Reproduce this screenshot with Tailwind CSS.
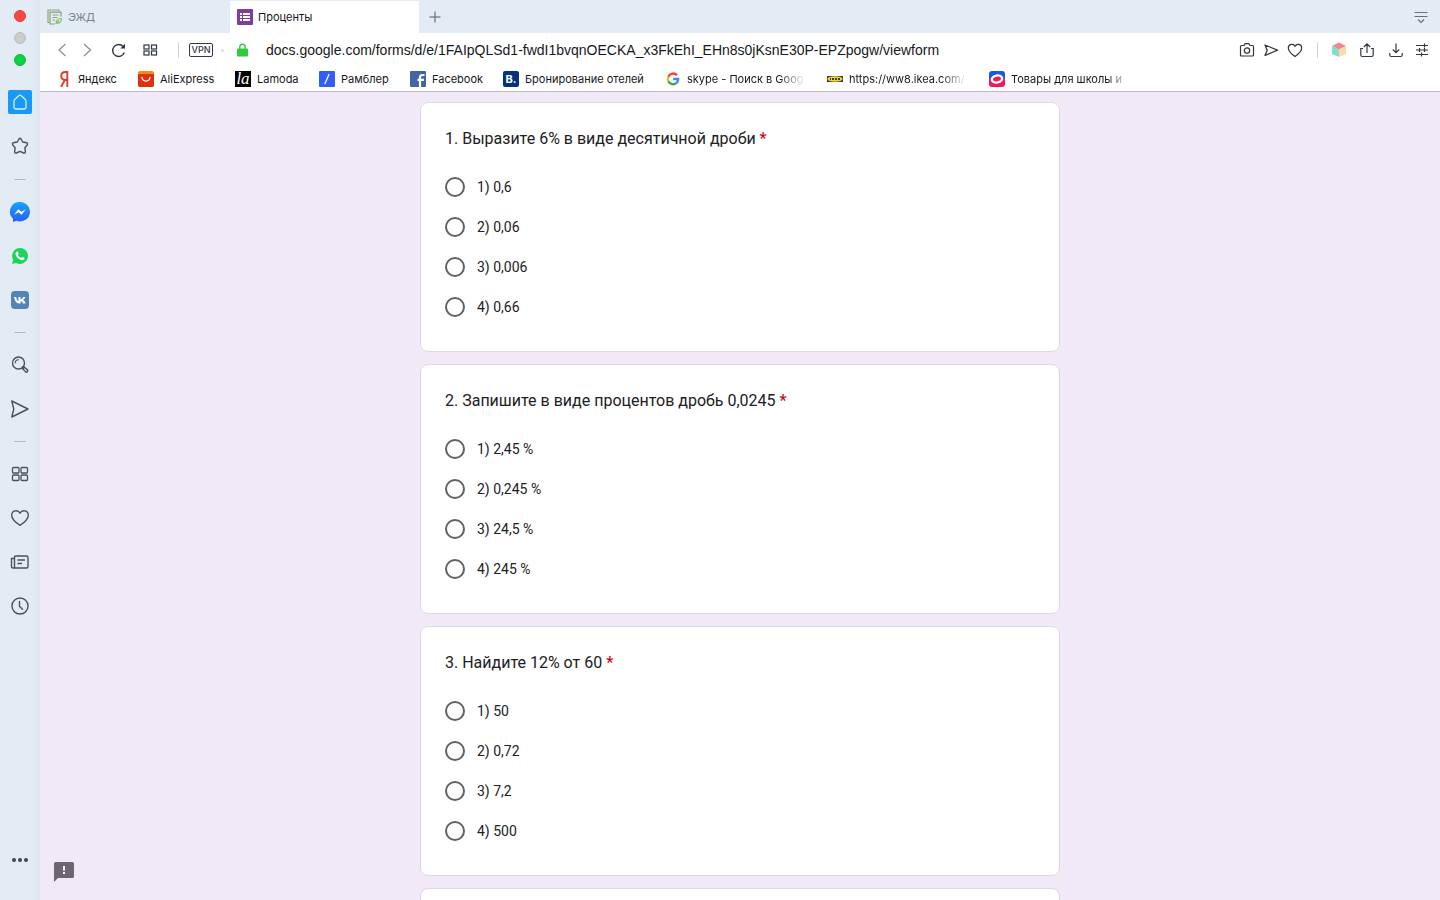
<!doctype html>
<html lang="ru">
<head>
  <meta charset="UTF-8">
  <meta name="viewport" content="width=device-width, initial-scale=1.0">
  <title>Проценты</title>
  <script src="https://cdn.jsdelivr.net/npm/@tailwindcss/browser@4"></script>
</head>
<body class="h-screen flex overflow-hidden bg-[#f1e9f8] font-['Inter','Liberation_Sans',sans-serif] text-[#16181b]">
    <!-- Sidebar -->
    <aside class="w-10 shrink-0 flex flex-col items-center bg-linear-to-r from-[#e3ecf5] from-75% to-[#dde5f0] text-[#4a525b]">
        <div class="h-20 pt-[10px] flex flex-col gap-[10px]">
            <button aria-label="Закрыть" class="block size-3 rounded-full bg-[#fc4640] border border-[#e23e3c]"></button>
            <button aria-label="Свернуть" class="block size-3 rounded-full bg-[#cccdcb] border border-[#bcbdbc]"></button>
            <button aria-label="Развернуть" class="block size-3 rounded-full bg-[#09d43f] border border-[#0cbb3a]"></button>
        </div>
        <nav class="flex flex-col items-center">
            <a href="#" aria-label="Главная" class="h-11 w-10 flex items-center justify-center">
                <span class="size-6 rounded-xs bg-[#1899f5] flex items-center justify-center">
                    <svg class="size-5" viewBox="0 0 20 20" fill="none" stroke="#d9f0ff" stroke-width="1.3" stroke-linejoin="round"><path d="M10 3.2Q10.7 3.2 11.3 3.7L15 7.2Q16 8.2 16 9.5V15Q16 17 14 17H6Q4 17 4 15V9.5Q4 8.2 5 7.2L8.7 3.7Q9.3 3.2 10 3.2Z"/></svg>
                </span>
            </a>
            <a href="#" aria-label="Закладки" class="h-11 w-10 flex items-center justify-center">
                <svg class="size-5" viewBox="0 0 20 20" fill="none" stroke="currentColor" stroke-width="1.4" stroke-linejoin="round"><path d="M9 3Q10 1.6 11 3L12.7 6L16.8 6.8Q18.2 7.4 17.3 8.7L14.9 11.8L15.4 15.8Q15.2 17.5 13.6 17L10 15.4L6.4 17Q4.8 17.5 4.6 15.8L5.1 11.8L2.7 8.7Q1.8 7.4 3.2 6.8L7.3 6Z"/></svg>
            </a>
            <div class="h-[22px] flex items-center"><hr class="w-3 border-[#b3bdc7]"></div>
            <a href="#" aria-label="Messenger" class="h-11 w-10 flex items-center justify-center">
                <svg class="size-5" viewBox="0 0 20 20"><defs><linearGradient id="ms" x1="0" y1="0" x2="0" y2="1"><stop offset="0" stop-color="#16a3fc"/><stop offset="1" stop-color="#2b5df5"/></linearGradient></defs><path fill="url(#ms)" d="M10 0a10 9.7 0 1 1-3.5 18.8L3 20V16.8A9.7 9.7 0 0 1 10 0Z"/><path fill="#fff" d="M4 12.7 8.3 7.2l3.1 2.5L16 7.2l-4.5 5.5-3-2.5Z"/></svg>
            </a>
            <a href="#" aria-label="WhatsApp" class="h-11 w-10 flex items-center justify-center">
                <svg class="size-[18px]" viewBox="0 0 18 18"><path fill="#1bd45e" d="M9 1a8 8 0 1 1-3.9 15L1 17l1.2-4A8 8 0 0 1 9 1Z"/><path fill="#fff" d="M6 4.6c.5-.1.8 0 1 .5l.7 1.5c.1.3 0 .5-.8 1.4.8 1.5 1.8 2.4 3.3 3 .8-1 .9-1.2 1.3-1l1.8.9c.4.2.2 1-.2 1.6-.6.7-1.7 1-2.8.6C7.6 12 6 10.5 5 8.5c-.9-1.7-.4-3.1 1-3.9Z"/></svg>
            </a>
            <a href="#" aria-label="ВКонтакте" class="h-11 w-10 flex items-center justify-center">
                <svg class="size-[18px]" viewBox="0 0 18 18"><rect width="18" height="18" rx="4" fill="#5484b5"/><path fill="#fff" d="M9.3 12.6C5.8 12.6 3.7 10.2 3 5.9h2.2c.3 2.3 1 3.8 2.2 4.3V5.9h2.2v2.6c1-.2 1.9-1.2 2.5-2.6h2.2c-.3 1.4-1.2 2.5-2.2 3.2 1.2.6 2 1.8 2.6 3.5h-2.5c-.5-1.2-1.3-2-2.6-2.3v2.3Z"/></svg>
            </a>
            <div class="h-[21px] flex items-center"><hr class="w-3 border-[#b3bdc7]"></div>
            <a href="#" aria-label="Поиск" class="h-11 w-10 flex items-center justify-center">
                <svg class="size-5" viewBox="0 0 20 20" fill="none" stroke="currentColor" stroke-width="1.4" stroke-linecap="round" stroke-linejoin="round"><circle cx="8.5" cy="8" r="6"/><path stroke-width="1.1" d="M5.2 8a3.3 3.3 0 0 1 3.3-3.3"/><path d="M12.9 12.1l.8.8M13.8 11.7l3.7 3.2q.7 1-.1 1.8t-1.8.2l-3.3-3.7q-.3-.8.3-1.3t1.2-.2Z"/></svg>
            </a>
            <a href="#" aria-label="Flow" class="h-11 w-10 flex items-center justify-center">
                <svg class="size-5" viewBox="0 0 20 20" fill="none" stroke="currentColor" stroke-width="1.4" stroke-linejoin="round"><path d="M1.8 2 18 10 1.8 18 3.8 10Z"/></svg>
            </a>
            <div class="h-[21px] flex items-center"><hr class="w-3 border-[#b3bdc7]"></div>
            <a href="#" aria-label="Экспресс-панель" class="h-11 w-10 flex items-center justify-center">
                <svg class="size-5" viewBox="0 0 20 20" fill="none" stroke="currentColor" stroke-width="1.3"><rect x="2.5" y="3.5" width="6.5" height="5.5" rx="1"/><rect x="11" y="3.5" width="6.5" height="5.5" rx="1"/><rect x="2.5" y="11" width="6.5" height="5.5" rx="1"/><rect x="11" y="11" width="6.5" height="5.5" rx="1"/></svg>
            </a>
            <a href="#" aria-label="Избранное" class="h-11 w-10 flex items-center justify-center">
                <svg class="size-5" viewBox="0 0 20 20" fill="none" stroke="currentColor" stroke-width="1.4" stroke-linejoin="round"><path d="M10 17.3C6 14.8 1.7 11.2 1.7 7.3c0-5 6.3-6 8.3-2 2-4 8.3-3 8.3 2 0 3.9-4.3 7.5-8.3 10Z"/></svg>
            </a>
            <a href="#" aria-label="Новости" class="h-11 w-10 flex items-center justify-center">
                <svg class="size-5" viewBox="0 0 20 20" fill="none" stroke="currentColor" stroke-width="1.4"><path d="M4.5 16H3q-1.5 0-1.5-1.5V6.5h3M4.5 16V5q0-1 1-1h11q1.5 0 1.5 1.5v9q0 1.5-1.5 1.5H4.5M7.5 8H15M7.5 11.5H12"/></svg>
            </a>
            <a href="#" aria-label="История" class="h-11 w-10 flex items-center justify-center">
                <svg class="size-5" viewBox="0 0 20 20" fill="none" stroke="currentColor" stroke-width="1.4" stroke-linecap="round"><circle cx="10" cy="10" r="8"/><path d="M9.5 5.5v4.7l3 3"/></svg>
            </a>
        </nav>
        <button aria-label="Ещё" class="mt-auto mb-[30px] w-10 h-5 flex items-center justify-center gap-[2px]">
            <span class="size-1 rounded-full bg-[#3d444d]"></span>
            <span class="size-1 rounded-full bg-[#3d444d]"></span>
            <span class="size-1 rounded-full bg-[#3d444d]"></span>
        </button>
    </aside>

    <div class="flex-1 min-w-0 flex flex-col">
        <!-- Tabs -->
        <div class="h-[33px] shrink-0 bg-[#e3ebf5] flex items-end text-[11px]">
            <button class="w-[190px] h-8 pl-[7px] flex items-center gap-[5px] text-[#7b828b]">
                <svg class="size-4" viewBox="0 0 16 16" fill="none" stroke="#8c9d80" stroke-width="1.2"><path d="M2.5 13.5H1V1h11v1.5" stroke="#87ad72"/><path d="M14 7.5V3.2H3V15h5M5.5 6h6M5.5 8.5h5M5.5 11h2.5"/><path d="M9 14.5c0-3 2-5 5.5-5 0 3-2 5-5.5 5ZM9 14.5l3-3" stroke="#85c66a"/></svg>
                <span>ЭЖД</span>
            </button>
            <button class="w-[189px] h-8 pl-[7px] flex items-center gap-[5px] bg-white">
                <svg class="size-4" viewBox="0 0 16 16"><rect width="16" height="16" rx="1" fill="#7b3fa0"/><path fill="#fff" d="M3 4h2v2H3zM6 4h7v2H6zM3 7h2v2H3zM6 7h7v2H6zM3 10h2v2H3zM6 10h7v2H6z"/></svg>
                <span>Проценты</span>
            </button>
            <button aria-label="Новая вкладка" class="size-8 flex items-center justify-center">
                <svg class="size-3" viewBox="0 0 12 12" stroke="#535b64"><path d="M6 .5v11M.5 6h11"/></svg>
            </button>
            <button aria-label="Меню вкладок" class="ml-auto mr-3 h-8 flex items-center">
                <svg class="size-[14px]" viewBox="0 0 14 14" fill="none" stroke="#657080" stroke-width="1.2"><path d="M.5 2.5h13M.5 6.5h13M4 9.5l3 3 3-3"/></svg>
            </button>
        </div>

        <!-- Address bar -->
        <div class="h-[34px] shrink-0 bg-white flex items-center text-[#31383f]">
            <div class="w-[138px] shrink-0 pl-[14px] flex items-center">
                <button aria-label="Назад" class="mr-[10px]"><svg class="size-4" viewBox="0 0 16 16" fill="none" stroke="#8c9196" stroke-width="1.3"><path d="M11.5 2 5 8l6.5 6"/></svg></button>
                <button aria-label="Вперёд" class="mr-[14px]"><svg class="size-4" viewBox="0 0 16 16" fill="none" stroke="#8c9196" stroke-width="1.3"><path d="M4 2l6.5 6L4 14"/></svg></button>
                <button aria-label="Обновить" class="mr-4"><svg class="size-4" viewBox="0 0 16 16" fill="none" stroke="currentColor" stroke-width="1.4"><path d="M14.3 10.5A6 6 0 1 1 13.2 4.5"/><path d="M15 1.8v4.7h-4.7Z" fill="currentColor" stroke="none"/></svg></button>
                <button aria-label="Экспресс-панель"><svg class="size-4" viewBox="0 0 16 16" fill="none" stroke="currentColor" stroke-width="1.2"><rect x="2" y="3" width="5" height="4"/><rect x="9.5" y="3" width="5" height="4"/><rect x="2" y="9" width="5" height="4"/><rect x="9.5" y="9" width="5" height="4"/></svg></button>
            </div>
            <div class="w-[11px] h-4 border-l border-[#cfd2d6] shrink-0"></div>
            <button class="w-6 h-[14px] shrink-0 border border-[#31383f] rounded-xs text-[9px] leading-3 font-medium text-center">VPN</button>
            <span class="size-[3px] ml-2 mr-[13px] rounded-full bg-[#dde0e3] shrink-0"></span>
            <svg class="w-[11px] h-[14px] mr-[18px] shrink-0" viewBox="0 0 11 14"><path d="M2.8 7V4q0-2.8 2.7-2.8T8.2 4V7" fill="none" stroke="#32c93c" stroke-width="1.4"/><rect y="5.5" width="11" height="8" rx="1" fill="#32c93c"/></svg>
            <input type="text" aria-label="Адрес" class="flex-1 min-w-0 text-sm text-[#16181b] outline-none font-['Liberation_Sans',sans-serif]" value="docs.google.com/forms/d/e/1FAIpQLSd1-fwdI1bvqnOECKA_x3FkEhI_EHn8s0jKsnE30P-EPZpogw/viewform">
            <div class="shrink-0 flex items-center pr-[10px]">
                <button aria-label="Снимок" class="mr-2"><svg class="size-4" viewBox="0 0 16 16" fill="none" stroke="currentColor" stroke-width="1.2"><path d="M1.5 4.5q0-1 1-1H5L6.2 1.6h3.6L11 3.5h2.5q1 0 1 1V13q0 1-1 1h-11q-1 0-1-1Z"/><circle cx="8" cy="8.6" r="2.7"/></svg></button>
                <button aria-label="Flow" class="mr-2"><svg class="size-4" viewBox="0 0 16 16" fill="none" stroke="currentColor" stroke-width="1.3" stroke-linejoin="round"><path d="M2 3 14.5 8.2 2 13.5 4.2 8.2Z"/></svg></button>
                <button aria-label="В избранное" class="mr-[14px]"><svg class="size-4" viewBox="0 0 16 16" fill="none" stroke="currentColor" stroke-width="1.2"><path d="M8 14.5C4.5 12 1.3 9 1.3 6 1.3 2 6.3 1 8 4.3 9.7 1 14.7 2 14.7 6c0 3-3.2 6-6.7 8.5Z"/></svg></button>
                <div class="h-4 w-[14px] border-l border-[#cfd2d6]"></div>
                <button aria-label="Расширение" class="mr-3"><svg class="size-4" viewBox="0 0 16 16"><path fill="#f28492" d="M8 .5 15 4 8 7.5 1 4Z"/><path fill="#7edfca" d="M1 4l7 3.5V15L1 12Z"/><path fill="#fbd9a6" d="M15 4 8 7.5V15l7-3Z"/></svg></button>
                <button aria-label="Поделиться" class="mr-[13px]"><svg class="size-4" viewBox="0 0 16 16" fill="none" stroke="currentColor" stroke-width="1.2"><path d="M4 6.5H1.8V13q0 1.5 1.5 1.5h9.4q1.5 0 1.5-1.5V6.5H12M8 11V1.8M4.8 5 8 1.8 11.2 5"/></svg></button>
                <button aria-label="Загрузки" class="mr-[10px]"><svg class="size-4" viewBox="0 0 16 16" fill="none" stroke="currentColor" stroke-width="1.2"><path d="M1.8 11v2q0 1.5 1.5 1.5h9.4q1.5 0 1.5-1.5v-2M8 1.5v9.2M4.8 7.5 8 10.7l3.2-3.2"/></svg></button>
                <button aria-label="Настройка"><svg class="size-4" viewBox="0 0 16 16" fill="none" stroke="currentColor" stroke-width="1.2"><path d="M2 3.5h12M2 8h12M2 12.5h12M10.5 1.5v4M5.5 6v4M10.5 6v4M7.5 10.5v4"/></svg></button>
            </div>
        </div>

        <!-- Bookmarks -->
        <nav class="h-[25px] shrink-0 bg-white border-b border-[#bfb9c9] pl-4 flex items-center gap-[22px] text-[11px] whitespace-nowrap">
            <a href="#" class="w-[60px] shrink-0 flex items-center gap-[6px]">
                <svg class="size-4 shrink-0" viewBox="0 0 16 16" fill="none" stroke="#e23b30" stroke-width="1.9"><path d="M11.3 16V1H9.5C3.8 1 3.8 9 9.3 9h2M8.8 9 5 16"/></svg>
                <span>Яндекс</span>
            </a>
            <a href="#" class="w-[75px] shrink-0 flex items-center gap-[6px]">
                <svg class="size-4 shrink-0" viewBox="0 0 16 16"><rect width="16" height="16" rx="2" fill="#f58b1f"/><path fill="#e0300f" d="M0 3h16v11q0 2-2 2H2q-2 0-2-2Z"/><path d="M4 6.5c.5 4.7 7.5 4.7 8 0" fill="none" stroke="#fff" stroke-width="1.3" stroke-linecap="round"/></svg>
                <span>AliExpress</span>
            </a>
            <a href="#" class="w-[62px] shrink-0 flex items-center gap-[6px]">
                <span class="size-4 shrink-0 bg-black text-white text-center text-[17px] leading-4 italic font-['Liberation_Serif',serif]" aria-hidden="true">la</span>
                <span>Lamoda</span>
            </a>
            <a href="#" class="w-[69px] shrink-0 flex items-center gap-[6px]">
                <svg class="size-4 shrink-0" viewBox="0 0 16 16"><rect width="16" height="16" rx="1" fill="#315efb"/><path d="M10.2 3 5.8 13" stroke="#fff" stroke-width="1.3"/></svg>
                <span>Рамблер</span>
            </a>
            <a href="#" class="w-[71px] shrink-0 flex items-center gap-[6px]">
                <svg class="size-4 shrink-0" viewBox="0 0 16 16"><rect width="16" height="16" rx="1" fill="#4465a5"/><path d="M10 16V6.5q0-2.5 2.5-2.5H14.5M7.5 8.8h6.5" fill="none" stroke="#fff" stroke-width="2.2"/></svg>
                <span>Facebook</span>
            </a>
            <a href="#" class="w-[140px] shrink-0 flex items-center gap-[6px]">
                <span class="size-4 shrink-0 rounded-xs bg-[#04337b] text-white text-center leading-4 font-bold" aria-hidden="true">B.</span>
                <span>Бронирование отелей</span>
            </a>
            <a href="#" class="w-[140px] shrink-0 flex items-center gap-[6px]">
                <svg class="size-4 shrink-0" viewBox="0 0 16 16" fill="none" stroke-width="2.3"><path stroke="#ea4335" d="M12 4.3A5.2 5.2 0 0 0 3.3 5.7"/><path stroke="#fbbc05" d="M3.3 5.7a5.2 5.2 0 0 0 0 4.6"/><path stroke="#34a853" d="M3.3 10.3a5.2 5.2 0 0 0 8.2 1.6"/><path stroke="#4285f4" d="M11.5 11.9A5.2 5.2 0 0 0 13.2 8H8.2"/></svg>
                <span class="flex-1 overflow-hidden [mask-image:linear-gradient(to_right,black_78%,transparent)]">skype - Поиск в Goog</span>
            </a>
            <a href="#" class="w-[140px] shrink-0 flex items-center gap-[6px]">
                <svg class="size-4 shrink-0" viewBox="0 0 16 16"><path fill="#3c3d30" d="M0 5h16v6H0z"/><ellipse cx="8" cy="8" rx="7.5" ry="2.7" fill="#f1d32b"/><path fill="#3c3d30" d="M3 7h1v2H3zM5 7h2v2H5zM8 7h2v2H8zM11 7h2v2h-2z"/></svg>
                <span class="flex-1 overflow-hidden [mask-image:linear-gradient(to_right,black_78%,transparent)]">https://ww8.ikea.com/</span>
            </a>
            <a href="#" class="w-[140px] shrink-0 flex items-center gap-[6px]">
                <svg class="size-4 shrink-0" viewBox="0 0 16 16"><path fill="#175ce0" d="M3 0h10q3 0 3 3v5H0V3q0-3 3-3Z"/><path fill="#f3175c" d="M0 8h16v5q0 3-3 3H3q-3 0-3-3Z"/><ellipse cx="8" cy="8" rx="5.2" ry="3.4" fill="#f3175c" stroke="#fff" stroke-width="2.4" transform="rotate(-12 8 8)"/></svg>
                <span class="flex-1 overflow-hidden [mask-image:linear-gradient(to_right,black_82%,transparent)]">Товары для школы и</span>
            </a>
        </nav>

        <!-- Form -->
        <main class="relative flex-1 min-h-0 overflow-hidden px-4 pt-[10px] font-[Roboto,'Liberation_Sans',sans-serif] text-[#202124]">
            <form class="max-w-[640px] mx-auto flex flex-col gap-3">
                <fieldset class="bg-white border border-[#dcd8e2] rounded-lg p-6">
                    <legend class="float-left w-full mb-4 text-base leading-6">1. Выразите 6% в виде десятичной дроби <span class="font-medium text-[#d0021b]">*</span></legend>
                    <div class="clear-both text-sm">
                        <label class="h-10 flex items-center gap-3"><input type="radio" name="q1" class="appearance-none size-5 rounded-full border-2 border-[#5f6368] checked:border-[6px]">1) 0,6</label>
                        <label class="h-10 flex items-center gap-3"><input type="radio" name="q1" class="appearance-none size-5 rounded-full border-2 border-[#5f6368] checked:border-[6px]">2) 0,06</label>
                        <label class="h-10 flex items-center gap-3"><input type="radio" name="q1" class="appearance-none size-5 rounded-full border-2 border-[#5f6368] checked:border-[6px]">3) 0,006</label>
                        <label class="h-10 flex items-center gap-3"><input type="radio" name="q1" class="appearance-none size-5 rounded-full border-2 border-[#5f6368] checked:border-[6px]">4) 0,66</label>
                    </div>
                </fieldset>
                <fieldset class="bg-white border border-[#dcd8e2] rounded-lg p-6">
                    <legend class="float-left w-full mb-4 text-base leading-6">2. Запишите в виде процентов дробь 0,0245 <span class="font-medium text-[#d0021b]">*</span></legend>
                    <div class="clear-both text-sm">
                        <label class="h-10 flex items-center gap-3"><input type="radio" name="q2" class="appearance-none size-5 rounded-full border-2 border-[#5f6368] checked:border-[6px]">1) 2,45 %</label>
                        <label class="h-10 flex items-center gap-3"><input type="radio" name="q2" class="appearance-none size-5 rounded-full border-2 border-[#5f6368] checked:border-[6px]">2) 0,245 %</label>
                        <label class="h-10 flex items-center gap-3"><input type="radio" name="q2" class="appearance-none size-5 rounded-full border-2 border-[#5f6368] checked:border-[6px]">3) 24,5 %</label>
                        <label class="h-10 flex items-center gap-3"><input type="radio" name="q2" class="appearance-none size-5 rounded-full border-2 border-[#5f6368] checked:border-[6px]">4) 245 %</label>
                    </div>
                </fieldset>
                <fieldset class="bg-white border border-[#dcd8e2] rounded-lg p-6">
                    <legend class="float-left w-full mb-4 text-base leading-6">3. Найдите 12% от 60 <span class="font-medium text-[#d0021b]">*</span></legend>
                    <div class="clear-both text-sm">
                        <label class="h-10 flex items-center gap-3"><input type="radio" name="q3" class="appearance-none size-5 rounded-full border-2 border-[#5f6368] checked:border-[6px]">1) 50</label>
                        <label class="h-10 flex items-center gap-3"><input type="radio" name="q3" class="appearance-none size-5 rounded-full border-2 border-[#5f6368] checked:border-[6px]">2) 0,72</label>
                        <label class="h-10 flex items-center gap-3"><input type="radio" name="q3" class="appearance-none size-5 rounded-full border-2 border-[#5f6368] checked:border-[6px]">3) 7,2</label>
                        <label class="h-10 flex items-center gap-3"><input type="radio" name="q3" class="appearance-none size-5 rounded-full border-2 border-[#5f6368] checked:border-[6px]">4) 500</label>
                    </div>
                </fieldset>
                <div class="h-20 bg-white border border-[#dcd8e2] rounded-lg"></div>
            </form>
            <button aria-label="Сообщить о проблеме" class="absolute left-[14px] bottom-[18px]">
                <svg class="size-5" viewBox="0 0 20 20"><path fill="#6c6572" d="M1.5 0h17Q20 0 20 1.5v13q0 1.5-1.5 1.5H4l-4 4V1.5Q0 0 1.5 0Z"/><path fill="#fff" d="M9 4h2v4.5H9zM9 10h2v2H9z"/></svg>
            </button>
        </main>
    </div>
</body>
</html>
